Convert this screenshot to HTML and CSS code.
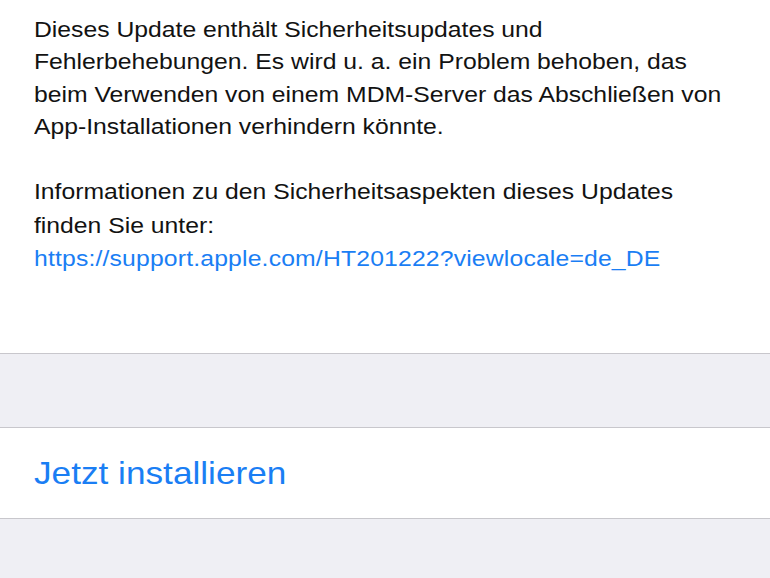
FILE: index.html
```html
<!DOCTYPE html>
<html lang="de">
<head>
<meta charset="utf-8">
<title>Update</title>
<link rel="stylesheet" href="styles.css">
</head>
<body>
<main class="screen">
  <section class="notes">
    <p class="para para-main">Dieses Update enthält Sicherheitsupdates und<br>Fehlerbehebungen. Es wird u.&nbsp;a. ein Problem behoben, das<br>beim Verwenden von einem MDM-Server das Abschließen von<br>App-Installationen verhindern könnte.</p>
    <p class="para para-info">Informationen zu den Sicherheitsaspekten dieses Updates<br>finden Sie unter:<br><a class="link" href="#">https://support.apple.com/HT201222?viewlocale=de_DE</a></p>
  </section>
  <div class="spacer"></div>
  <div class="action-row">
    <span class="action">Jetzt installieren</span>
  </div>
  <div class="footer"></div>
</main>
</body>
</html>
```
FILE: styles.css
```css
html, body {
  margin: 0;
  padding: 0;
  background: #efeff4;
}
.screen {
  width: 770px;
  height: 578px;
  display: flex;
  flex-direction: column;
  font-family: "Liberation Sans", Arial, sans-serif;
  overflow: hidden;
}
.notes {
  background: #ffffff;
  height: 354px;
  padding: 14px 0 0 34px;
  box-sizing: border-box;
  border-bottom: 1px solid #c8c7cc;
}
.para {
  margin: 0;
  font-size: 22px;
  line-height: 32.3px;
  color: #121212;
  white-space: nowrap;
  transform: scaleX(1.124);
  transform-origin: left top;
}
.para-info {
  margin-top: 32px;
  line-height: 33.5px;
}
.link {
  color: #1a7ef4;
  text-decoration: none;
  letter-spacing: 0.15px;
}
.spacer {
  height: 73px;
  background: #efeff4;
}
.action-row {
  background: #ffffff;
  height: 92px;
  box-sizing: border-box;
  border-top: 1px solid #c8c7cc;
  border-bottom: 1px solid #c8c7cc;
  display: flex;
  align-items: center;
  padding-left: 34px;
}
.action {
  font-size: 32px;
  color: #1a7ef4;
  transform: scaleX(1.1);
  transform-origin: left center;
}
.footer {
  flex: 1;
  background: #efeff4;
}
```
